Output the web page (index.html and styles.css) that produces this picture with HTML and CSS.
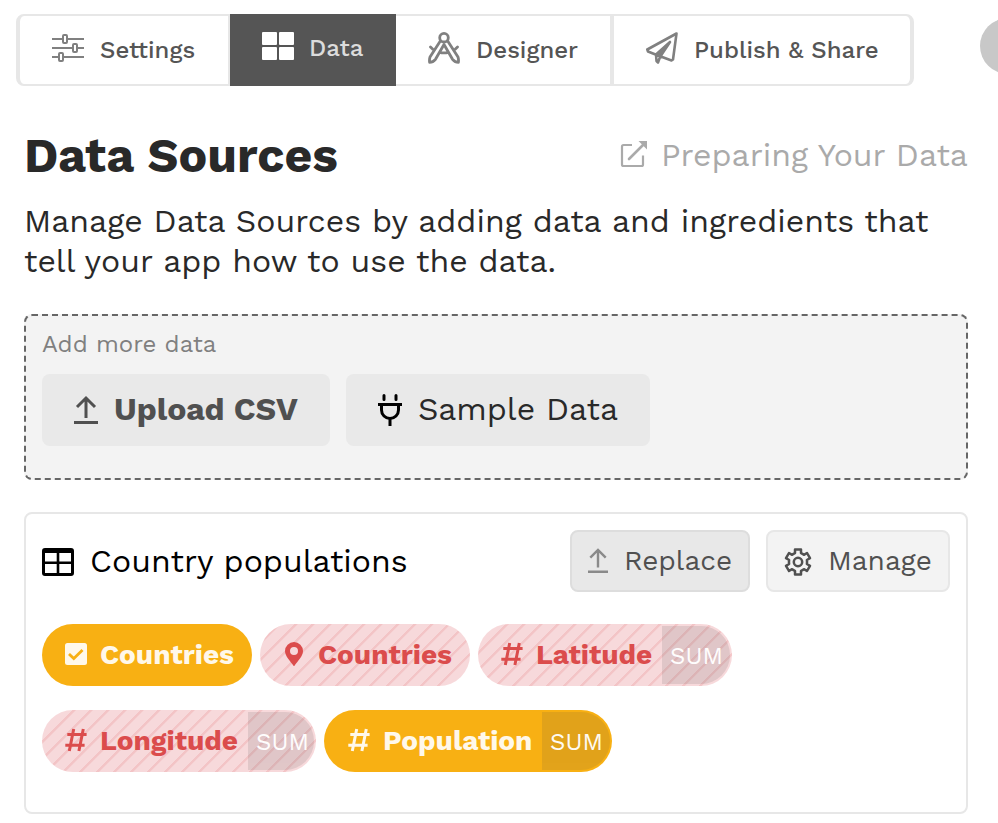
FILE: index.html
```html
<!DOCTYPE html>
<html lang="en">
<head>
<meta charset="utf-8">
<title>Data Sources</title>
<link rel="stylesheet" href="styles.css">
</head>
<body>
<header class="topbar">
  <nav class="tabs">
    <a class="tab tab-settings">
      <svg class="tab-icon" viewBox="0 0 32 32" fill="none" stroke="#808080" stroke-width="2"><path d="M0 7h10.500M15.500 7H32M0 16h20.500M25.500 16H32M0 25h6.500M11.500 25H32"/><rect x="11" y="3" width="4" height="8" rx="1"/><rect x="21" y="12" width="4" height="8" rx="1"/><rect x="7" y="21" width="4" height="8" rx="1"/></svg>
      <span>Settings</span>
    </a>
    <a class="tab tab-data">
      <svg class="tab-icon" viewBox="0 0 32 32" fill="#fff"><rect y="2" width="15" height="13" rx="1"/><rect x="17" y="2" width="15" height="13" rx="1"/><rect y="17" width="15" height="13" rx="1"/><rect x="17" y="17" width="15" height="13" rx="1"/></svg>
      <span>Data</span>
    </a>
    <a class="tab tab-designer">
      <svg class="tab-icon" viewBox="0 0 32 32" fill="none" stroke="#808080" stroke-width="2.800" stroke-linejoin="round" stroke-linecap="round"><circle cx="16" cy="5.700" r="4.300"/><path d="M12 9.500 2 25Q1.200 27.500 1.600 30.300 5 30.300 7.500 27.300L16 12.500 24.500 27.300Q27 30.300 30.400 30.300 30.800 27.500 30 25L20 9.500M2.500 15 4.800 17.200M29.500 15 27.200 17.200M11.500 20.300Q16 21.500 20.500 20.300"/></svg>
      <span>Designer</span>
    </a>
    <a class="tab tab-publish">
      <svg class="tab-icon" viewBox="0 0 32 32" fill="none" stroke="#808080" stroke-width="2.600" stroke-linejoin="round" stroke-linecap="round"><path d="M30.500 1.500 1.300 17.500 2 19.500 9.500 22.500 25.500 28.500 27 27.500ZM10 22.500 24 10 14 25 12 30.500 10.500 29Z"/><path d="M10 22.500 24 10 14 24Z" fill="#808080" stroke-width="1"/></svg>
      <span>Publish &amp; Share</span>
    </a>
  </nav>
  <div class="avatar"></div>
</header>
<main>
  <div class="heading">
    <h1>Data Sources</h1>
    <a class="help">
      <svg class="help-icon" viewBox="0 0 28 28" fill="none" stroke="#aaa" stroke-width="2.200"><path d="M12 5H3.500Q2 5 2 6.500V24.500Q2 26 3.500 26H21.500Q23 26 23 24.500V15.500"/><path d="M9 19 24 4" stroke-width="2.600" stroke-linecap="round"/><path d="M18.500 1H27V9.500Z" fill="#aaa" stroke="none"/></svg>
      <span>Preparing Your Data</span>
    </a>
  </div>
  <p class="intro">Manage Data Sources by adding data and ingredients that tell your app how to use the data.</p>
  <section class="add">
    <div class="add-label">Add more data</div>
    <div class="add-buttons">
      <button class="big upload">
        <svg class="big-icon" viewBox="0 0 24 32" fill="none" stroke="#505050" stroke-width="3"><path d="M0 28.500H24M12 24V4M3 13 12 4 21 13"/></svg>
        <span>Upload CSV</span>
      </button>
      <button class="big sample">
        <svg class="big-icon" viewBox="0 0 24 32" fill="none" stroke="#000" stroke-width="3"><path d="M0 10.500H24M3.500 10.500V16A8.500 8.500 0 0 0 20.500 16V10.500M12 24.500V32"/><path d="M6 1.500V5.500M18 1.500V5.500" stroke-linecap="round"/></svg>
        <span>Sample Data</span>
      </button>
    </div>
  </section>
  <section class="card">
    <div class="card-head">
      <svg class="table-icon" viewBox="0 0 32 28"><path fill="#000" fill-rule="evenodd" d="M3 0H29Q32 0 32 3V25Q32 28 29 28H3Q0 28 0 25V3Q0 0 3 0ZM3 5V13.500H14.700V5ZM17.300 5V13.500H29V5ZM3 16V25H14.700V16ZM17.300 16V25H29V16Z"/></svg>
      <h2>Country populations</h2>
      <button class="small replace">
        <svg class="small-icon" viewBox="0 0 20 26" fill="none" stroke="#8a8a8a" stroke-width="2.400"><path d="M0 23.700H20M10 19.500V2M2.300 9.700 10 2 17.700 9.700"/></svg>
        <span>Replace</span>
      </button>
      <button class="small manage">
        <svg class="gear-icon" viewBox="0 0 28 28" fill="none" stroke="#505050" stroke-width="2.500" stroke-linejoin="round"><path d="M11 1.500H17V5.100Q18.600 5.700 19.900 6.800L23 5 26 10.200 22.900 12Q23.200 14 22.900 16L26 17.800 23 23 19.900 21.200Q18.600 22.300 17 22.900V26.500H11V22.900Q9.400 22.300 8.100 21.200L5 23 2 17.800 5.100 16Q4.800 14 5.100 12L2 10.200 5 5 8.100 6.800Q9.400 5.700 11 5.100Z"/><circle cx="14" cy="14" r="4.200"/></svg>
        <span>Manage</span>
      </button>
    </div>
    <div class="pills">
      <div class="pill gold countries">
        <svg class="pill-icon" viewBox="0 0 24 24"><rect x="1" y="1" width="22" height="22" rx="2.500" fill="#fff8ea"/><path d="M5 12 9.800 16.500 18.500 8" fill="none" stroke="#f8b013" stroke-width="2.800"/></svg>
        <span>Countries</span>
      </div>
      <div class="pill rose countries">
        <svg class="pill-icon" viewBox="0 0 24 24"><path fill="#db4c4c" fill-rule="evenodd" d="M12 0A9 9 0 0 0 3 9C3 14.500 8.500 19 12 24.500 15.500 19 21 14.500 21 9A9 9 0 0 0 12 0ZM12 5A4 4 0 1 1 12 13 4 4 0 0 1 12 5Z"/></svg>
        <span>Countries</span>
      </div>
      <div class="pill rose latitude">
        <svg class="pill-icon hash" viewBox="0 0 24 24"><path d="M9.700 1 5.300 23M19.300 1 14.900 23M3.300 6.500H22.600M1.300 17.200H20.600"/></svg>
        <span>Latitude</span><span class="agg">SUM</span>
      </div>
      <div class="pill rose longitude">
        <svg class="pill-icon hash" viewBox="0 0 24 24"><path d="M9.700 1 5.300 23M19.300 1 14.900 23M3.300 6.500H22.600M1.300 17.200H20.600"/></svg>
        <span>Longitude</span><span class="agg">SUM</span>
      </div>
      <div class="pill gold population">
        <svg class="pill-icon hash" viewBox="0 0 24 24"><path d="M9.700 1 5.300 23M19.300 1 14.900 23M3.300 6.500H22.600M1.300 17.200H20.600"/></svg>
        <span>Population</span><span class="agg">SUM</span>
      </div>
    </div>
  </section>
</main>
</body>
</html>
```
FILE: styles.css
```css
* { box-sizing: border-box; }
body { margin: 0; height: 823px; overflow: hidden; background: #fff; color: #292929; font-family: "Work Sans", Inter, "Liberation Sans", sans-serif; }
svg { display: block; flex: none; }
span, h1, h2 { white-space: nowrap; }
button { font: inherit; color: inherit; margin: 0; border: 0; }
.topbar { display: flex; align-items: flex-start; padding: 14px 0 0 16px; }
.tabs { display: flex; flex: none; width: 898px; height: 72px; border: 2px solid #e7e7e7; border-width: 2px 4px; border-radius: 8px; }
.tab { display: flex; align-items: center; gap: 16px; height: 68px; padding: 0 0 2px 32px; color: #555; font-size: 24px; font-weight: 500; flex: none; }
.tab span { padding-top: 2px; }
.tab-icon { width: 32px; height: 32px; margin-top: -2px; }
.tab-settings { width: 210px; border-right: 2px solid #e7e7e7; }
.tab-data { width: 166px; height: 72px; margin-top: -2px; padding: 0 0 6px 32px; gap: 15px; background: #555; color: #dcdcdc; }
.tab-designer { width: 218px; border-right: 4px solid #e7e7e7; }
.tab-publish { width: 296px; }
.avatar { flex: none; width: 56px; height: 56px; margin: 4px 0 0 66px; border-radius: 50%; background: #c8c8c8; }
main { padding: 0 30px 0 24px; }
.heading { display: flex; align-items: center; justify-content: space-between; height: 60px; margin-top: 40px; }
h1 { margin: 0; font-size: 48px; font-weight: 700; line-height: 60px; }
.help { display: flex; align-items: center; gap: 13px; width: 348px; margin-top: -2px; color: #aaa; font-size: 32px; }
.help-icon { width: 28px; height: 28px; margin-top: -2px; }
.intro { margin: 15px 0 0; font-size: 32px; line-height: 40px; }
.add { height: 166px; margin-top: 33px; padding: 14px 16px; border: 2px dashed #666; border-radius: 8px; background: #f3f3f3; }
.add-label { height: 28px; line-height: 28px; font-size: 24px; color: #808080; }
.add-buttons { display: flex; gap: 16px; margin-top: 16px; }
.big { display: flex; align-items: center; gap: 16px; height: 72px; padding: 0 0 0 32px; border-radius: 8px; background: #e9e9e9; font-size: 32px; }
.big span { margin-top: -2px; }
.big-icon { width: 24px; height: 32px; }
.upload { width: 288px; color: #505050; font-weight: 700; }
.sample { width: 304px; color: #292929; }
.card { height: 302px; margin-top: 32px; padding: 16px; border: 2px solid #e7e7e7; border-radius: 8px; }
.card-head { display: flex; align-items: center; height: 62px; }
.table-icon { width: 32px; height: 28px; margin-top: 2px; }
h2 { flex: 1; margin: 0 0 0 16px; color: #000; font-size: 32px; font-weight: 400; }
.small { display: flex; align-items: center; height: 62px; padding: 0 0 0 16px; border: 2px solid #e7e7e7; border-radius: 8px; background: #f3f3f3; color: #505050; font-size: 28px; }
.small span { margin-top: -2px; }
.replace { width: 180px; gap: 16px; border-color: #ddd; background: #e8e8e8; }
.manage { width: 184px; margin-left: 16px; gap: 16px; }
.small-icon { width: 20px; height: 26px; }
.gear-icon { width: 28px; height: 28px; margin-top: 2px; }
.pills { display: flex; flex-wrap: wrap; gap: 24px 8px; margin-top: 32px; }
.pill { display: flex; align-items: center; height: 62px; padding: 0 2px 2px 22px; border-radius: 31px; font-size: 28px; font-weight: 700; }
.pill-icon { width: 24px; height: 24px; margin-right: 12px; }
.hash path { fill: none; stroke: currentColor; stroke-width: 3; }
.gold { background: #f8b013; color: #fff8ea; }
.rose { background: repeating-linear-gradient(-45deg, #f7d9db 0 9px, #f3c4c6 10px 12px); color: #db4c4c; }
.countries { width: 210px; }
.latitude { width: 254px; }
.longitude { width: 274px; }
.longitude .agg { width: 66px; }
.population { width: 288px; padding-left: 23px; }
.agg { width: 68px; height: 58px; margin: 2px 0 0 auto; padding-left: 8px; border-radius: 0 29px 29px 0; background: rgba(80, 80, 80, .14); color: #fff; opacity: .95; font-size: 24px; font-weight: 400; line-height: 60px; }
```
